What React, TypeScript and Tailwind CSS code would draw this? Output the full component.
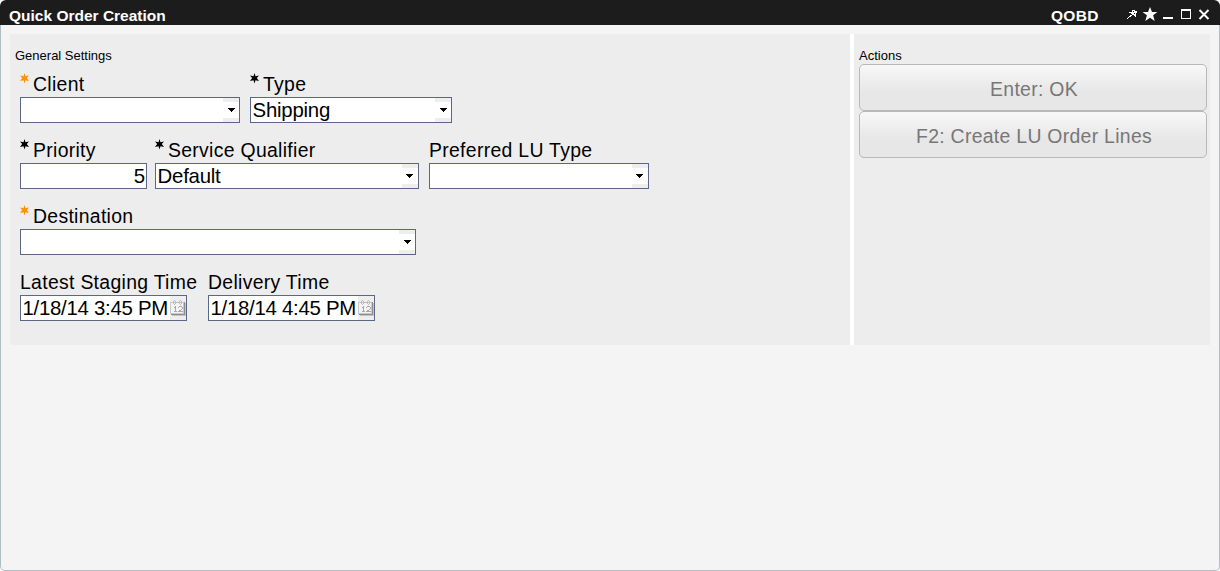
import React from "react";

function Mark({ color }: { color: string }) {
  return (
    <svg className="mt-px mr-[4px] shrink-0" width="9" height="11" viewBox="0 0 9 11" fill={color}>
      <path d="M4.5 0 5.5 3.2 9 2.5 6.8 5 9 8 5.5 7.2 4.5 10.5 3.5 7.2 0 8 2.2 5 0 2.5 3.5 3.2Z" />
    </svg>
  );
}

function Label({ text, mark }: { text: string; mark?: string }) {
  return (
    <div className="flex h-[25px] whitespace-nowrap text-[19.4px] leading-[25px] tracking-[0.31px]">
      {mark && <Mark color={mark} />}
      <span>{text}</span>
    </div>
  );
}

type FieldProps = {
  label: string;
  width: string;
  mark?: string;
  value?: string;
  kind?: "select" | "number" | "date";
  arrowPad?: string;
};

function Field({ label, width, mark, value = "", kind = "select", arrowPad = "pl-[5px]" }: FieldProps) {
  return (
    <div className={`${width} shrink-0`}>
      <Label text={label} mark={mark} />
      <div className="flex h-[26px] border border-[#5b6785] bg-white text-[20.4px] leading-[24px]">
        <span
          className={
            kind === "number"
              ? "flex-1 pr-px text-right"
              : "min-w-0 flex-1 whitespace-nowrap pl-[1.5px] " + (kind === "date" ? "tracking-[-0.28px]" : "tracking-[-0.22px]")
          }
        >
          {value}
        </span>
        {kind === "select" && (
          <span className="flex w-[16px] flex-col justify-center bg-[#eeeeee] py-[4px]">
            <span className={`flex flex-1 items-center bg-white ${arrowPad}`}>
              <svg width="7" height="4" viewBox="0 0 7 4" shapeRendering="crispEdges">
                <path d="M0 0h7v1H6v1H5v1H4v1H3V3H2V2H1V1H0z" />
              </svg>
            </span>
          </span>
        )}
        {kind === "date" && (
          <span className="w-[16px] shrink-0 bg-[#eeeeee] pt-[4px]">
            <svg width="16" height="16" viewBox="0 0 16 16" fill="none" shapeRendering="crispEdges">
              <path d="M.5 2.5h13v11H.5z" fill="#f4f4f4" stroke="#c8c8c8" />
              <path d="M14.5 2v12.5H1" stroke="#8e8e8e" />
              <path d="M15.5 3v12.5H2" stroke="#c4c4c4" />
              <path d="M3 1h1v3H3zM5 1h1v3H5zM4 0h1v1H4zM4 4h1v1H4zM9 1h1v3H9zM11 1h1v3h-1zM10 0h1v1h-1zM10 4h1v1h-1zM6 2h3v1H6z" fill="#bcbcbc" />
              <path d="M5 6h1v6H5zM4 7h1v1H4zM4 11h3v1H4zM9 6h3v1H9zM8 7h1v1H8zM12 7h1v2h-1zM11 9h1v1h-1zM9 10h2v1H9zM8 11h5v1H8z" fill="#a8a8a8" />
            </svg>
          </span>
        )}
      </div>
    </div>
  );
}

function Action({ text }: { text: string }) {
  return (
    <button className="block h-[47px] w-full rounded-[5px] border border-[#b8b8b8] bg-linear-to-b from-[#f8f8f8] via-[#e7e7e7] via-60% to-[#e7e7e7] pt-[4px] pl-[2px] text-center text-[19.4px] tracking-[0.3px] text-[#777777]">
      {text}
    </button>
  );
}

export default function App() {
  return (
    <div className="flex h-[571px] w-[1220px] flex-col bg-white font-['Liberation_Sans',Arial,sans-serif] text-black">
      <header className="flex h-[25px] shrink-0 items-start rounded-t-[6px] bg-[#1c1c1c] pr-[8px] pl-[9px] text-[15.5px] leading-[31px] font-bold text-white">
        <span className="whitespace-nowrap">Quick Order Creation</span>
        <span className="ml-auto w-[75px] tracking-[0.3px]">QOBD</span>
        <svg className="mt-[6px] shrink-0" width="86" height="17" viewBox="0 0 86 17" fill="#fff">
          <path d="M6 4h3v1h2v2h-1v4H9v-1H8V9H6V8H5V7H3V6h3zM4 9h2v1H4zM3 10h2v1H3zM2 11h1v1H2zM1 12h1v1H1z" shapeRendering="crispEdges" />
          <path d="M7 5h1v1H7zM8 7h1v1H8z" fill="#1c1c1c" shapeRendering="crispEdges" />
          <path d="m24 1 2 5h5.4l-4.3 3.3L28.7 15 24 11.7 19.3 15l1.6-5.7L16.6 6H22z" />
          <path d="M37 11h10v2H37z" />
          <path d="M55 3h10v10H55zM56 5v7h8V5z" fillRule="evenodd" />
          <path d="m73.5 4 9 9M82.5 4l-9 9" stroke="#fff" strokeWidth="2" />
        </svg>
      </header>
      <main className="flex flex-1 flex-col rounded-b-[5px] border border-t-0 border-[#afbdc7] bg-[#f4f4f4] px-[9px] pt-[9px]">
        <div className="flex h-[311px]">
          <section className="w-[840px] bg-[#ededed] pt-[13px]">
            <h2 className="h-[25px] pl-[5px] text-[13px] leading-[18px]">General Settings</h2>
            <div className="flex flex-col gap-[15px] pl-[10px]">
              <div className="flex gap-[10px]">
                <Field label="Client" width="w-[220px]" mark="#ff9200" />
                <Field label="Type" width="w-[202px]" mark="#000" value="Shipping" />
              </div>
              <div className="flex">
                <Field label="Priority" width="w-[127px]" mark="#000" value="5" kind="number" />
                <div className="ml-[8px] flex gap-[10px]">
                  <Field label="Service Qualifier" width="w-[264px]" mark="#000" value="Default" arrowPad="pl-[4px]" />
                  <Field label="Preferred LU Type" width="w-[220px]" arrowPad="pl-[4px]" />
                </div>
              </div>
              <Field label="Destination" width="w-[396px]" mark="#ff9200" />
              <div className="flex gap-[21px]">
                <Field label="Latest Staging Time" width="w-[167px]" value="1/18/14 3:45 PM" kind="date" />
                <Field label="Delivery Time" width="w-[167px]" value="1/18/14 4:45 PM" kind="date" />
              </div>
            </div>
          </section>
          <div className="w-[4px] bg-white" />
          <section className="flex-1 bg-[#ededed] pt-[13px] pr-[3px] pl-[5px]">
            <h2 className="h-[17px] text-[13px] leading-[18px]">Actions</h2>
            <Action text="Enter: OK" />
            <Action text="F2: Create LU Order Lines" />
          </section>
        </div>
      </main>
    </div>
  );
}
